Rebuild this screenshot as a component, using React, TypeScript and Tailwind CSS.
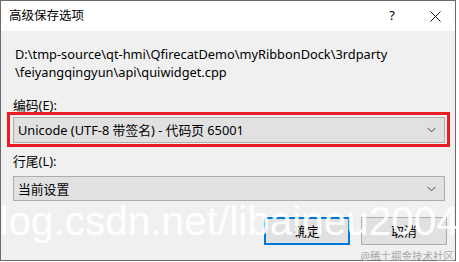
import React from "react";

const ui = "font-['Noto_Sans','Noto_Sans_CJK_SC',sans-serif]";

function Chevron() {
  return (
    <svg width="9" height="6" viewBox="0 0 9 6" className="absolute right-[8px] top-1/2 -translate-y-1/2">
      <path d="M0.5 0.8 L4.5 4.8 L8.5 0.8" fill="none" stroke="#444" strokeWidth="1" />
    </svg>
  );
}

function Combo({ text, h }: { text: string; h: string }) {
  return (
    <div className={`relative flex items-center ${h} bg-[#e1e1e1] border border-[#adadad] pl-[4px] text-[12.8px] text-black`}>
      {text}
      <Chevron />
    </div>
  );
}

export default function App() {
  return (
    <div className={`relative w-[459px] h-[262px] bg-white overflow-hidden ${ui}`}>
      <div className="flex flex-col w-[456px] h-[261px] border border-[#6b6b6b] bg-[#f0f0f0]">
        {/* 标题栏 */}
        <div className="flex items-center h-[30px] bg-white shrink-0">
          <span className="pl-[8px] text-[12.5px] text-black">高级保存选项</span>
          <span className="ml-auto text-[13px] text-black mr-[35px]">?</span>
          <svg width="11" height="11" viewBox="0 0 11 11" className="mr-[14px]">
            <path d="M0.5 0.5 L10.5 10.5 M10.5 0.5 L0.5 10.5" stroke="#111" strokeWidth="1" />
          </svg>
        </div>

        {/* 内容 */}
        <div className="flex flex-col pl-[12px] pr-[8px] pt-[14px] text-[12.8px] text-black leading-[18px]">
          <div className="pl-[2px]">
            <div>D:\tmp-source\qt-hmi\QfirecatDemo\myRibbonDock\3rdparty</div>
            <div>\feiyangqingyun\api\quiwidget.cpp</div>
          </div>

          <div className="mt-[15px]">编码(E):</div>
          <div className="relative mt-[3px] mr-[2px]">
            <Combo text="Unicode (UTF-8 带签名) - 代码页 65001" h="h-[26px]" />
            <div className="absolute -left-[6px] -right-[5px] -top-[5px] -bottom-[4px] border-[3px] border-[#ec1c24]" />
          </div>

          <div className="mt-[9px]">行尾(L):</div>
          <div className="mt-[6px] mr-[2px]">
            <Combo text="当前设置" h="h-[25px]" />
          </div>

          <div className="flex justify-end gap-[11px] mt-[16px]">
            <div className="flex items-center justify-center w-[86px] h-[28px] bg-[#e1e1e1] border-2 border-[#0078d7]">确定</div>
            <div className="flex items-center justify-center w-[86px] h-[28px] bg-[#e1e1e1] border border-[#adadad]">取消</div>
          </div>
        </div>
      </div>

      {/* 水印 */}
      <div className="absolute left-[-23px] top-[197px] font-['Liberation_Sans',sans-serif] text-[40.5px] leading-[48px] text-white/90 whitespace-nowrap pointer-events-none">
        blog.csdn.net/libaineu2004
      </div>
      <div className="absolute right-[5px] top-[249px] text-[10.5px] leading-[14px] text-[#a8a8a8] whitespace-nowrap">
        @稀土掘金技术社区
      </div>
    </div>
  );
}
